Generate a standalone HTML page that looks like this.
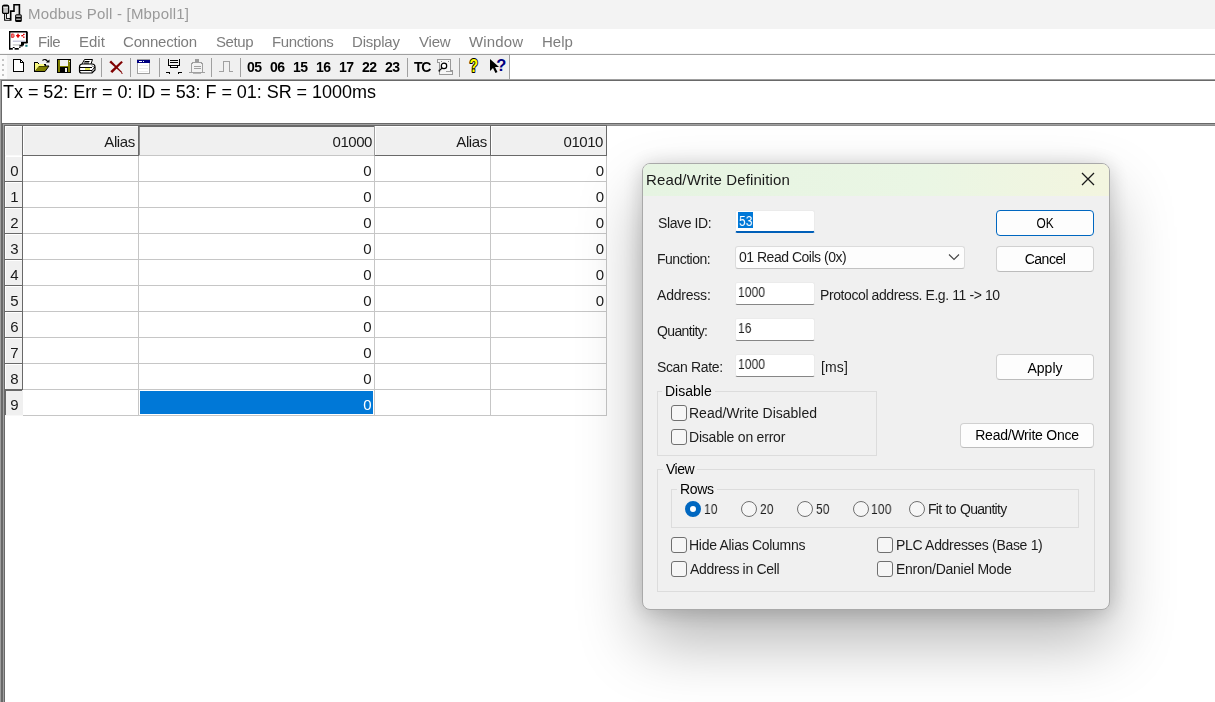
<!DOCTYPE html>
<html><head><meta charset="utf-8"><title>Modbus Poll - [Mbpoll1]</title>
<style>
*{box-sizing:border-box;margin:0;padding:0}
html,body{width:1215px;height:702px;overflow:hidden;background:#fff}
body{position:relative;font-family:"Liberation Sans",sans-serif;color:#000}
.abs,.abs>*{position:absolute}
.t{position:absolute;white-space:pre;line-height:1}
/* title & menu */
#title{left:0;top:0;width:1215px;height:29px;background:#f3f3f3}
#title .t{left:28px;top:6px;font-size:15px;color:#9a9a9a;letter-spacing:.19px}
#menu{left:0;top:29px;width:1215px;height:25px;background:#fff}
#menu .t{top:5px;font-size:15px;color:#7d7d7d}
#menuline{left:0;top:54px;width:1215px;height:1px;background:#a0a0a0}
#tb{left:0;top:55px;width:510px;height:24px;background:#f0f0f0}
#tb .sep{top:3px;width:1px;height:18px;background:#a0a0a0}
#tb .n{top:5px;font-size:14px;font-weight:bold;letter-spacing:-.55px}
/* grid */
#grid{left:4px;top:125px;width:603px;height:291px;background:#fff}
.hc{position:absolute;top:0;height:31px;background:#f0f0f0;border-right:1px solid #a0a0a0;border-bottom:1px solid #a0a0a0;font-size:15px;text-align:right;padding:9px 3px 0 0;line-height:1}
.rh{position:absolute;left:0;width:19px;height:26px;background:#f0f0f0;border-right:1px solid #696969;border-bottom:1px solid #696969;font-size:15px;text-align:center;line-height:1;padding-top:8px;color:#1a1a1a}
.c{position:absolute;height:26px;border-right:1px solid #c8c8c8;border-bottom:1px solid #c8c8c8;font-size:15px;text-align:right;line-height:1;padding:8px 2px 0 0;color:#1a1a1a}
/* dialog */
#dlgbg{left:642px;top:163px;width:468px;height:447px;background:#f0f0f0;border-radius:8px;border:1px solid #a9a9a9;box-shadow:0 32px 64px rgba(0,0,0,.29),0 2px 21px rgba(0,0,0,.19);overflow:hidden}
#dlgbg .cap{left:0;top:0;width:467px;height:32px;background:linear-gradient(90deg,#e6f4e2 0%,#eaf6e4 60%,#f3f5df 100%)}
.lbl{position:absolute;white-space:pre;line-height:1;font-size:14px;color:#1c1c1c}
.inp{position:absolute;background:#fff;border:1px solid #ebebeb;border-bottom:1px solid #868686;border-radius:2.500px;height:23px;width:80px}
.btn{position:absolute;background:#fdfdfd;border:1px solid #d0d0d0;border-bottom-color:#bcbcbc;border-radius:4px;height:25px;text-align:center;font-size:14px;line-height:1;padding-top:5px}
.cb{position:absolute;width:16px;height:16px;border:1px solid #707070;border-radius:3px;background:#f6f6f6}
.rb{position:absolute;width:16px;height:16px;border:1px solid #707070;border-radius:50%;background:#f6f6f6}
.gb{position:absolute;border:1px solid #dcdcdc}
.gl{position:absolute;white-space:pre;line-height:1;font-size:14px;background:#f0f0f0;padding:0 3px}
.gt{font-size:15px;color:#1a1a1a}
.t,.lbl,.btn,.gl{will-change:transform}
</style></head><body>
<div id="title" class="abs">
<svg style="left:0;top:0" width="26" height="26" viewBox="0 0 26 26">
 <path d="M5.500 13v6.400h4.500" stroke="#000" stroke-width="2.800" fill="none"/>
 <path d="M5.500 13v6.400h4.200" stroke="#f4f4f4" stroke-width=".9" fill="none"/>
 <path d="M14.600 5h4.800v9.500h-3.300z" fill="#e6e6e6"/>
 <path d="M10.700 20.800v-9.700h3.300v-6.300h5.400v9.700" stroke="#000" stroke-width="1.600" fill="none" stroke-linejoin="miter"/>
 <rect x="2.600" y="5.400" width="6" height="8" rx="1.200" fill="#c4c4c4" stroke="#000" stroke-width="1.300"/>
 <rect x="3" y="4.700" width="5.200" height="1.700" rx=".8" fill="#000"/>
 <rect x="3.400" y="6.900" width="4.400" height=".9" fill="#f4f4f4"/>
 <rect x="15.100" y="14.200" width="6.700" height="7.700" rx="1.500" fill="#000"/>
 <rect x="16.200" y="15.300" width="4.500" height="1.700" fill="#b4b4b4"/>
 <rect x="16.200" y="18.700" width="4.500" height="1" fill="#f4f4f4"/>
</svg>
<span class="t">Modbus Poll - [Mbpoll1]</span>
</div>
<div id="menu" class="abs">
<svg style="left:8px;top:1px" width="22" height="22" viewBox="0 0 22 22">
 <path d="M1.700 1.500h17.300v11.500h-5.500v3.200h-2.700v2.300h-9.100z" fill="#fff"/>
 <path d="M1.700 19.300v-17.600h17.400" fill="none" stroke="#000" stroke-width="1.400"/>
 <path d="M18.900 1.700v11.300" fill="none" stroke="#000" stroke-width="1.900"/>
 <path d="M19.500 12.600h-5.600v3h-2.600" fill="none" stroke="#000" stroke-width="1.700"/>
 <rect x="13" y="12" width="3" height="3.500" fill="#000"/>
 <rect x="11" y="16.800" width="1.600" height="1" fill="#000"/>
 <rect x="1" y="18" width="3.800" height="1.700" fill="#000"/>
 <rect x="4.800" y="17" width="1.800" height="1" fill="#000"/>
 <rect x="6.600" y="18" width="4.200" height="1.700" fill="#000"/>
 <g fill="#e00000"><rect x="3.300" y="3.600" width="1.200" height="4.200"/><rect x="4.300" y="3.600" width="1.400" height="1"/><rect x="4.300" y="6.800" width="1.400" height="1"/><rect x="5.400" y="4.400" width="1" height="2.600"/>
 <rect x="8" y="5.200" width="4" height="1"/><rect x="9.500" y="3.600" width="1" height="4.300"/><rect x="8.800" y="4.500" width="2.400" height="2.400" transform="rotate(45 10 5.700)"/>
 <rect x="13.300" y="5" width="2" height="1.400"/><rect x="15" y="3.800" width="1.600" height="1.200"/><rect x="15" y="6.600" width="1.600" height="1.200"/></g>
 <rect x="4.800" y="10.700" width="12" height=".9" fill="#a8a8c8"/>
 <rect x="4.800" y="14.500" width="7" height=".9" fill="#b0b0b0"/>
 <rect x="17.300" y="14.800" width="2.200" height="2" fill="#208080"/>
</svg>
<span class="t" style="left:38px;letter-spacing:-.5px">File</span>
<span class="t" style="left:79px">Edit</span>
<span class="t" style="left:123px;letter-spacing:-.2px">Connection</span>
<span class="t" style="left:216px;letter-spacing:-.4px">Setup</span>
<span class="t" style="left:272px;letter-spacing:-.4px">Functions</span>
<span class="t" style="left:352px;letter-spacing:-.2px">Display</span>
<span class="t" style="left:419px;letter-spacing:-.2px">View</span>
<span class="t" style="left:469px;letter-spacing:.15px">Window</span>
<span class="t" style="left:542px">Help</span>
</div>
<div id="menuline" class="abs"></div><div class="abs" style="left:0;top:53px;width:1215px;height:1px;background:#f6f6f6"></div>
<div id="tb" class="abs">
<div class="abs" style="left:0;top:0;width:7px;height:24px;background:#fafafa"><i style="left:2px;top:4px;width:2px;height:2px;background:#c4c4c4"></i><i style="left:2px;top:9px;width:2px;height:2px;background:#c4c4c4"></i><i style="left:2px;top:14px;width:2px;height:2px;background:#c4c4c4"></i><i style="left:2px;top:19px;width:2px;height:2px;background:#c4c4c4"></i></div>
<svg style="left:0;top:0" width="510" height="24" viewBox="0 0 510 24">
<g shape-rendering="crispEdges">
 <!-- new -->
 <path d="M13.5 4.5h7l3 3v9h-10z" fill="#fff" stroke="#000" stroke-width="1"/>
 <path d="M20.5 4.5v3h3" fill="none" stroke="#000" stroke-width="1"/>
 <!-- save -->
 <rect x="57.5" y="4.5" width="13" height="13" fill="#808000" stroke="#000"/>
 <rect x="60" y="5" width="8" height="6" fill="#f0f0f0"/>
 <rect x="60" y="12" width="8" height="5" fill="#000"/>
 <rect x="65" y="13" width="2" height="4" fill="#f0f0f0"/>
 <rect x="69" y="6" width="1" height="1" fill="#f0f0f0"/>
 <!-- separators -->
 <rect x="101" y="3" width="1" height="19" fill="#a0a0a0"/>
 <rect x="130" y="3" width="1" height="19" fill="#a0a0a0"/>
 <rect x="159" y="3" width="1" height="19" fill="#a0a0a0"/>
 <rect x="211" y="3" width="1" height="19" fill="#a0a0a0"/>
 <rect x="240" y="3" width="1" height="19" fill="#a0a0a0"/>
 <rect x="407" y="3" width="1" height="19" fill="#a0a0a0"/>
 <rect x="459" y="3" width="1" height="19" fill="#a0a0a0"/>
 <rect x="509" y="0" width="1" height="24" fill="#a0a0a0"/>
 <!-- window icon -->
 <rect x="137.500" y="4.500" width="12" height="14" fill="#fff" stroke="#a0a0a0"/>
 <rect x="137" y="4.500" width="13" height="3.300" fill="#000080"/>
 <rect x="139" y="6" width="3" height="1" fill="#fff"/><rect x="143" y="6" width="1" height="1" fill="#fff"/>
 <rect x="139" y="10" width="9" height="1" fill="#ececec"/><rect x="139" y="13" width="9" height="1" fill="#ececec"/><rect x="139" y="15.500" width="9" height="1" fill="#ececec"/>
 <!-- connect -->
 <rect x="168" y="4" width="1.300" height="7" fill="#000"/><rect x="178.700" y="4" width="1.300" height="7" fill="#000"/>
 <rect x="168" y="10" width="12" height="1.200" fill="#000"/>
 <rect x="170" y="4.700" width="8" height="1.300" fill="#000"/><rect x="170" y="6.700" width="8" height="1.300" fill="#000"/>
 <rect x="171" y="11" width="6" height="1.500" fill="#fff"/>
 <rect x="170" y="11" width="1" height="2" fill="#000"/><rect x="177" y="11" width="1" height="2" fill="#000"/><rect x="170" y="12.300" width="8" height="1" fill="#000"/>
 <rect x="166" y="17" width="4" height="1.200" fill="#000"/><rect x="169" y="18" width="1" height="1" fill="#000"/>
 <rect x="178" y="17" width="4" height="1.200" fill="#000"/><rect x="178" y="18" width="1" height="1" fill="#000"/>
 <!-- disconnect (gray) -->
 <rect x="195" y="4" width="4" height="3.500" fill="#9c9c9c"/>
 <path d="M192.500 7.500h9l1 2v7.500h-11v-7.500z" fill="#f2f2f2" stroke="#a0a0a0"/>
 <rect x="193.500" y="11" width="7.500" height="1" fill="#a0a0a0"/><rect x="193.500" y="13" width="7.500" height="1" fill="#a0a0a0"/>
 <rect x="189" y="17" width="16" height="1" fill="#a0a0a0"/>
 <rect x="193" y="18" width="8" height="1" fill="#b4b4b4"/>
 <!-- pulse -->
 <path d="M219 16.500h4.500v-10h5.500v10h4" fill="none" stroke="#a0a0a0"/>
 <!-- scroll w/ magnifier -->
 <path d="M437.500 4.500h13v11h2v4h-13v-12h-2z" fill="#f6f6f6" stroke="#989898"/>
 <rect x="446" y="16" width="6" height="1" fill="#a0a0a0"/>
 <rect x="441" y="6" width="1" height="1" fill="#909090"/><rect x="448" y="6" width="1" height="1" fill="#909090"/>
</g>
<!-- open folder -->
<path d="M34.500 16.500v-9h3l1 1.500h6.500v2" fill="#ffff80" stroke="#000" shape-rendering="crispEdges"/>
<path d="M34.500 16.500l4-5.500h10.500l-4 5.500z" fill="#808000" stroke="#000" stroke-width="1"/>
<path d="M35 8h3v1h6v2h-5l-4 5z" fill="#f8f880"/>
<path d="M42.500 5.500q3-2.500 5.500 1.500" fill="none" stroke="#000" stroke-width="1.1"/>
<path d="M46 7.500h3.500v-3z" fill="#000"/>
<!-- print -->
<path d="M82 9l2.500-4.500h8l-1.500 4.500" fill="#fff" stroke="#000" stroke-width="1"/>
<path d="M84.500 6.500h5M84 8h5" stroke="#000" stroke-width="1"/>
<path d="M79.500 12q0-3 3-3h9.500q3 0 3 3v3l-3 3h-10.500q-2 0-2-2z" fill="#fff" stroke="#000" stroke-width="1.2"/>
<path d="M80 12.500h12" stroke="#000" stroke-width="1"/>
<rect x="85" y="13.400" width="5" height="1.300" fill="#d0d800"/>
<path d="M80 15.500h12l3-3.500" stroke="#000" stroke-width="1" fill="none"/>
<path d="M92 10.500l2 2M92 15.500v2" stroke="#000" stroke-width=".8"/>
<!-- red X -->
<path d="M109.300 7.200l1.800-1.600l11.200 11.600l-.7.700z" fill="#800000"/>
<path d="M121.300 6l1.600 1.300l-10.600 10.700l-2-1.700z" fill="#800000"/>
<rect x="121.500" y="18" width="1" height="1" fill="#800000"/>
<!-- magnifier -->
<circle cx="444" cy="10.900" r="2.700" fill="#fff" stroke="#000" stroke-width="1.200"/>
<path d="M442 13l-3.500 3.500" stroke="#000" stroke-width="1.900" stroke-dasharray="1.100 .5"/>
<!-- yellow ? -->
<text transform="translate(469.600,17) scale(.8,1)" font-family="Liberation Sans, sans-serif" font-weight="bold" font-size="17.500" fill="#ffff00" stroke="#000" stroke-width="2" stroke-linejoin="round" paint-order="stroke">?</text>
<!-- arrow ? -->
<path d="M490 4v12l3-3 2.500 5 2-1-2.500-5h4z" fill="#000"/>
<text x="496.300" y="15.500" font-family="Liberation Sans, sans-serif" font-weight="bold" font-size="16.500" fill="#000080">?</text>
</svg>
<span class="t n" style="left:247px">05</span><span class="t n" style="left:270px">06</span><span class="t n" style="left:292.600px">15</span><span class="t n" style="left:315.600px">16</span><span class="t n" style="left:338.600px">17</span><span class="t n" style="left:362px">22</span><span class="t n" style="left:385px">23</span>
<span class="t n" style="left:414px;letter-spacing:-1.2px;font-weight:bold;font-size:14px">TC</span>

</div>
<!--P0-->
<div class="abs" id="frame">
<i style="left:0;top:79px;width:1215px;height:1px;background:#a0a0a0"></i>
<i style="left:0;top:80px;width:1215px;height:1px;background:#696969"></i>
<i style="left:0;top:79px;width:1px;height:623px;background:#a0a0a0"></i>
<i style="left:1px;top:80px;width:1px;height:622px;background:#696969"></i>
<i style="left:2px;top:123px;width:1213px;height:1px;background:#696969"></i>
<i style="left:3px;top:124px;width:1212px;height:1px;background:#a0a0a0"></i>
<i style="left:4px;top:125px;width:1211px;height:1px;background:#8a8a8a"></i><i style="left:4px;top:125px;width:603px;height:1px;background:#696969"></i>
<i style="left:2px;top:123px;width:1px;height:579px;background:#696969"></i>
<i style="left:3px;top:124px;width:1px;height:578px;background:#a0a0a0"></i>
<i style="left:4px;top:125px;width:1px;height:577px;background:#696969"></i>
</div>
<span class="t" id="tx" style="left:3px;top:83px;font-size:18px;letter-spacing:-.04px">Tx = 52: Err = 0: ID = 53: F = 01: SR = 1000ms</span>
<!--P1-->
<!--G0--><div class="abs" id="grid2">
<i style="left:5px;top:126px;width:602px;height:29px;background:#f0f0f0"></i>
<i style="left:5px;top:156px;width:17px;height:260px;background:#f0f0f0"></i>
<i style="left:5px;top:126px;width:17px;height:1px;background:#fff"></i>
<i style="left:5px;top:126px;width:1px;height:29px;background:#fff"></i>
<i style="left:23px;top:126px;width:115px;height:1px;background:#fff"></i>
<i style="left:23px;top:126px;width:1px;height:29px;background:#fff"></i>
<i style="left:375px;top:126px;width:115px;height:1px;background:#fff"></i>
<i style="left:375px;top:126px;width:1px;height:29px;background:#fff"></i>
<i style="left:491px;top:126px;width:115px;height:1px;background:#fff"></i>
<i style="left:491px;top:126px;width:1px;height:29px;background:#fff"></i>
<i style="left:22px;top:125px;width:1px;height:265px;background:#696969"></i>
<i style="left:22px;top:390px;width:1px;height:25px;background:#f0f0f0"></i>
<i style="left:5px;top:155px;width:17px;height:1px;background:#fafafa"></i>
<i style="left:23px;top:155px;width:116px;height:1px;background:#696969"></i>
<i style="left:138px;top:125px;width:1px;height:31px;background:#696969"></i>
<i style="left:139px;top:126px;width:235px;height:1px;background:#696969"></i>
<i style="left:139px;top:127px;width:1px;height:28px;background:#8c8c8c"></i>
<i style="left:139px;top:155px;width:236px;height:1px;background:#c6c6c6"></i>
<i style="left:374px;top:126px;width:1px;height:30px;background:#a0a0a0"></i>
<i style="left:375px;top:155px;width:232px;height:1px;background:#696969"></i>
<i style="left:490px;top:126px;width:1px;height:30px;background:#696969"></i>
<i style="left:606px;top:126px;width:1px;height:30px;background:#696969"></i>
<i style="left:23px;top:181px;width:584px;height:1px;background:#c6c6c6"></i>
<i style="left:5px;top:181px;width:17px;height:1px;background:#696969"></i>
<i style="left:5px;top:156px;width:17px;height:1px;background:#fff"></i>
<i style="left:5px;top:156px;width:1px;height:25px;background:#fff"></i>
<i style="left:23px;top:207px;width:584px;height:1px;background:#c6c6c6"></i>
<i style="left:5px;top:207px;width:17px;height:1px;background:#696969"></i>
<i style="left:5px;top:182px;width:17px;height:1px;background:#fff"></i>
<i style="left:5px;top:182px;width:1px;height:25px;background:#fff"></i>
<i style="left:23px;top:233px;width:584px;height:1px;background:#c6c6c6"></i>
<i style="left:5px;top:233px;width:17px;height:1px;background:#696969"></i>
<i style="left:5px;top:208px;width:17px;height:1px;background:#fff"></i>
<i style="left:5px;top:208px;width:1px;height:25px;background:#fff"></i>
<i style="left:23px;top:259px;width:584px;height:1px;background:#c6c6c6"></i>
<i style="left:5px;top:259px;width:17px;height:1px;background:#696969"></i>
<i style="left:5px;top:234px;width:17px;height:1px;background:#fff"></i>
<i style="left:5px;top:234px;width:1px;height:25px;background:#fff"></i>
<i style="left:23px;top:285px;width:584px;height:1px;background:#c6c6c6"></i>
<i style="left:5px;top:285px;width:17px;height:1px;background:#696969"></i>
<i style="left:5px;top:260px;width:17px;height:1px;background:#fff"></i>
<i style="left:5px;top:260px;width:1px;height:25px;background:#fff"></i>
<i style="left:23px;top:311px;width:584px;height:1px;background:#c6c6c6"></i>
<i style="left:5px;top:311px;width:17px;height:1px;background:#696969"></i>
<i style="left:5px;top:286px;width:17px;height:1px;background:#fff"></i>
<i style="left:5px;top:286px;width:1px;height:25px;background:#fff"></i>
<i style="left:23px;top:337px;width:584px;height:1px;background:#c6c6c6"></i>
<i style="left:5px;top:337px;width:17px;height:1px;background:#696969"></i>
<i style="left:5px;top:312px;width:17px;height:1px;background:#fff"></i>
<i style="left:5px;top:312px;width:1px;height:25px;background:#fff"></i>
<i style="left:23px;top:363px;width:584px;height:1px;background:#c6c6c6"></i>
<i style="left:5px;top:363px;width:17px;height:1px;background:#696969"></i>
<i style="left:5px;top:338px;width:17px;height:1px;background:#fff"></i>
<i style="left:5px;top:338px;width:1px;height:25px;background:#fff"></i>
<i style="left:23px;top:389px;width:584px;height:1px;background:#c6c6c6"></i>
<i style="left:5px;top:389px;width:17px;height:1px;background:#696969"></i>
<i style="left:5px;top:364px;width:17px;height:1px;background:#fff"></i>
<i style="left:5px;top:364px;width:1px;height:25px;background:#fff"></i>
<i style="left:23px;top:415px;width:584px;height:1px;background:#c6c6c6"></i>
<i style="left:5px;top:415px;width:18px;height:1px;background:#f8f8f8"></i>
<i style="left:138px;top:156px;width:1px;height:260px;background:#c6c6c6"></i>
<i style="left:374px;top:156px;width:1px;height:260px;background:#c6c6c6"></i>
<i style="left:490px;top:156px;width:1px;height:260px;background:#c6c6c6"></i>
<i style="left:606px;top:156px;width:1px;height:260px;background:#c6c6c6"></i>
<i style="left:5px;top:390px;width:17px;height:1px;background:#696969"></i>
<i style="left:5px;top:390px;width:1px;height:25px;background:#696969"></i>
<i style="left:140px;top:391px;width:233px;height:23px;background:#0078d7"></i>
</div>
<span class="t gt" style="left:6px;width:17px;text-align:center;top:163px">0</span>
<span class="t gt" style="left:300px;width:71.500px;text-align:right;top:163px;color:#1a1a1a">0</span>
<span class="t gt" style="left:540px;width:64px;text-align:right;top:163px">0</span>
<span class="t gt" style="left:6px;width:17px;text-align:center;top:189px">1</span>
<span class="t gt" style="left:300px;width:71.500px;text-align:right;top:189px;color:#1a1a1a">0</span>
<span class="t gt" style="left:540px;width:64px;text-align:right;top:189px">0</span>
<span class="t gt" style="left:6px;width:17px;text-align:center;top:215px">2</span>
<span class="t gt" style="left:300px;width:71.500px;text-align:right;top:215px;color:#1a1a1a">0</span>
<span class="t gt" style="left:540px;width:64px;text-align:right;top:215px">0</span>
<span class="t gt" style="left:6px;width:17px;text-align:center;top:241px">3</span>
<span class="t gt" style="left:300px;width:71.500px;text-align:right;top:241px;color:#1a1a1a">0</span>
<span class="t gt" style="left:540px;width:64px;text-align:right;top:241px">0</span>
<span class="t gt" style="left:6px;width:17px;text-align:center;top:267px">4</span>
<span class="t gt" style="left:300px;width:71.500px;text-align:right;top:267px;color:#1a1a1a">0</span>
<span class="t gt" style="left:540px;width:64px;text-align:right;top:267px">0</span>
<span class="t gt" style="left:6px;width:17px;text-align:center;top:293px">5</span>
<span class="t gt" style="left:300px;width:71.500px;text-align:right;top:293px;color:#1a1a1a">0</span>
<span class="t gt" style="left:540px;width:64px;text-align:right;top:293px">0</span>
<span class="t gt" style="left:6px;width:17px;text-align:center;top:319px">6</span>
<span class="t gt" style="left:300px;width:71.500px;text-align:right;top:319px;color:#1a1a1a">0</span>
<span class="t gt" style="left:6px;width:17px;text-align:center;top:345px">7</span>
<span class="t gt" style="left:300px;width:71.500px;text-align:right;top:345px;color:#1a1a1a">0</span>
<span class="t gt" style="left:6px;width:17px;text-align:center;top:371px">8</span>
<span class="t gt" style="left:300px;width:71.500px;text-align:right;top:371px;color:#1a1a1a">0</span>
<span class="t gt" style="left:6px;width:17px;text-align:center;top:397px">9</span>
<span class="t gt" style="left:300px;width:71.500px;text-align:right;top:397px;color:#fff">0</span>
<span class="t gt" style="left:54.949999999999996px;width:80px;text-align:right;top:134px;letter-spacing:-0.35px">Alias</span>
<span class="t gt" style="left:291.95px;width:80px;text-align:right;top:134px;letter-spacing:-0.45px">01000</span>
<span class="t gt" style="left:406.55px;width:80px;text-align:right;top:134px;letter-spacing:-0.35px">Alias</span>
<span class="t gt" style="left:523.25px;width:80px;text-align:right;top:134px;letter-spacing:-0.45px">01010</span><!--G1-->
<!--D0--><div id="dlgbg" class="abs"><div class="cap"></div></div>
<div class="abs" id="dl">
<span class="t" style="left:645.500px;top:172px;font-size:15px;letter-spacing:.12px;color:#1a1a1a">Read/Write Definition</span>
<svg style="left:1081px;top:172px" width="14" height="14" viewBox="0 0 14 14"><path d="M1 1l12 12M13 1L1 13" stroke="#1a1a1a" stroke-width="1.300" fill="none"/></svg>
<span class="lbl" style="left:657.7px;top:216px;letter-spacing:-0.4px;word-spacing:0px;">Slave ID:</span>
<span class="lbl" style="left:656.7px;top:252px;letter-spacing:-0.49px;word-spacing:0px;">Function:</span>
<span class="lbl" style="left:657.3px;top:288px;letter-spacing:-0.21px;word-spacing:0px;">Address:</span>
<span class="lbl" style="left:657.3px;top:324px;letter-spacing:-0.63px;word-spacing:0px;">Quantity:</span>
<span class="lbl" style="left:657.3px;top:360px;letter-spacing:-0.36px;word-spacing:0px;">Scan Rate:</span>
<div class="inp" style="left:735px;top:210px;height:23px;border-bottom:2px solid #005fb8"></div>
<i style="left:738px;top:212px;width:15px;height:16px;background:#0078d7"></i>
<span class="lbl" style="left:738.6px;top:213.5px;letter-spacing:0.3px;word-spacing:0px;color:#fff;transform:scaleX(0.85);transform-origin:0 0;">53</span>
<div class="inp" style="left:735px;top:281.5px;height:23.500px"></div>
<span class="lbl" style="left:738px;top:284.5px;letter-spacing:0.2px;word-spacing:0px;transform:scaleX(0.85);transform-origin:0 0;">1000</span>
<div class="inp" style="left:735px;top:317.5px;height:23.500px"></div>
<span class="lbl" style="left:738px;top:320.5px;letter-spacing:0.2px;word-spacing:0px;transform:scaleX(0.85);transform-origin:0 0;">16</span>
<div class="inp" style="left:735px;top:353.5px;height:23.500px"></div>
<span class="lbl" style="left:738px;top:356.5px;letter-spacing:0.2px;word-spacing:0px;transform:scaleX(0.85);transform-origin:0 0;">1000</span>
<div class="inp" style="left:735px;top:245.500px;width:230px;height:23.500px;border-color:#dcdcdc;border-bottom-color:#c2c2c2;border-radius:3px;background:#fdfdfd"></div>
<span class="lbl" style="left:739.4px;top:249.5px;letter-spacing:-0.49px;word-spacing:0px;">01 Read Coils (0x)</span>
<svg style="left:948px;top:253px" width="12" height="8" viewBox="0 0 12 8"><path d="M1 1.500l5 5 5-5" stroke="#444" stroke-width="1.100" fill="none"/></svg>
<span class="lbl" style="left:820.3px;top:288px;letter-spacing:-0.41px;word-spacing:0px;">Protocol address. E.g. 11 -&gt; 10</span>
<span class="lbl" style="left:820.5px;top:360px;letter-spacing:0.15px;word-spacing:0px;">[ms]</span>
<div class="btn" style="left:996px;top:210px;width:98px;height:25.500px;padding-top:5px;letter-spacing:0px;word-spacing:0px;border:1.500px solid #0067c0;height:26px;padding-left:1px;"><span style="display:inline-block;transform:scaleX(0.85)">OK</span></div>
<div class="btn" style="left:996px;top:246px;width:98px;height:25.500px;padding-top:5px;letter-spacing:-0.5px;word-spacing:0px;height:26px;">Cancel</div>
<div class="btn" style="left:996px;top:354px;width:98px;height:25.500px;padding-top:5px;letter-spacing:0px;word-spacing:0px;height:26px;padding-top:6px;">Apply</div>
<div class="btn" style="left:960px;top:423px;width:134px;height:25.500px;padding-top:5px;letter-spacing:-0.24px;word-spacing:0px;height:25px;padding-top:4px;">Read/Write Once</div>
<div class="gb" style="left:657px;top:391px;width:220px;height:65px"></div>
<span class="gl" style="left:662px;top:384px">Disable</span>
<div class="gb" style="left:657px;top:469px;width:438px;height:123px"></div>
<span class="gl" style="left:663px;top:462px;letter-spacing:-.5px">View</span>
<div class="gb" style="left:671px;top:489px;width:408px;height:39px"></div>
<span class="gl" style="left:676.600px;top:482px;letter-spacing:-.37px">Rows</span>
<div class="cb" style="left:671px;top:405px"></div>
<span class="lbl" style="left:689.4px;top:406px;letter-spacing:-0.01px;word-spacing:0px;">Read/Write Disabled</span>
<div class="cb" style="left:671px;top:429px"></div>
<span class="lbl" style="left:689.4px;top:430px;letter-spacing:-0.22px;word-spacing:0px;">Disable on error</span>
<div class="cb" style="left:671px;top:537px"></div>
<span class="lbl" style="left:689px;top:538px;letter-spacing:-0.29px;word-spacing:0px;">Hide Alias Columns</span>
<div class="cb" style="left:671px;top:561px"></div>
<span class="lbl" style="left:690px;top:562px;letter-spacing:-0.33px;word-spacing:0px;">Address in Cell</span>
<div class="cb" style="left:877px;top:537px"></div>
<span class="lbl" style="left:895.7px;top:538px;letter-spacing:-0.31px;word-spacing:0px;">PLC Addresses (Base 1)</span>
<div class="cb" style="left:877px;top:561px"></div>
<span class="lbl" style="left:895.7px;top:562px;letter-spacing:-0.26px;word-spacing:0px;">Enron/Daniel Mode</span>
<div class="rb" style="left:685px;top:501px;border:5px solid #0067c0;background:#fff"></div>
<span class="lbl" style="left:704px;top:502px;letter-spacing:0.3px;word-spacing:0px;transform:scaleX(0.85);transform-origin:0 0;">10</span>
<div class="rb" style="left:741px;top:501px"></div>
<span class="lbl" style="left:759.7px;top:502px;letter-spacing:0.3px;word-spacing:0px;transform:scaleX(0.85);transform-origin:0 0;">20</span>
<div class="rb" style="left:797px;top:501px"></div>
<span class="lbl" style="left:816px;top:502px;letter-spacing:0.3px;word-spacing:0px;transform:scaleX(0.85);transform-origin:0 0;">50</span>
<div class="rb" style="left:852.5px;top:501px"></div>
<span class="lbl" style="left:871.2px;top:502px;letter-spacing:0.3px;word-spacing:0px;transform:scaleX(0.85);transform-origin:0 0;">100</span>
<div class="rb" style="left:908.5px;top:501px"></div>
<span class="lbl" style="left:927.6px;top:502px;letter-spacing:-0.71px;word-spacing:1px;">Fit to Quantity</span>
</div><!--D1-->
</body></html>
